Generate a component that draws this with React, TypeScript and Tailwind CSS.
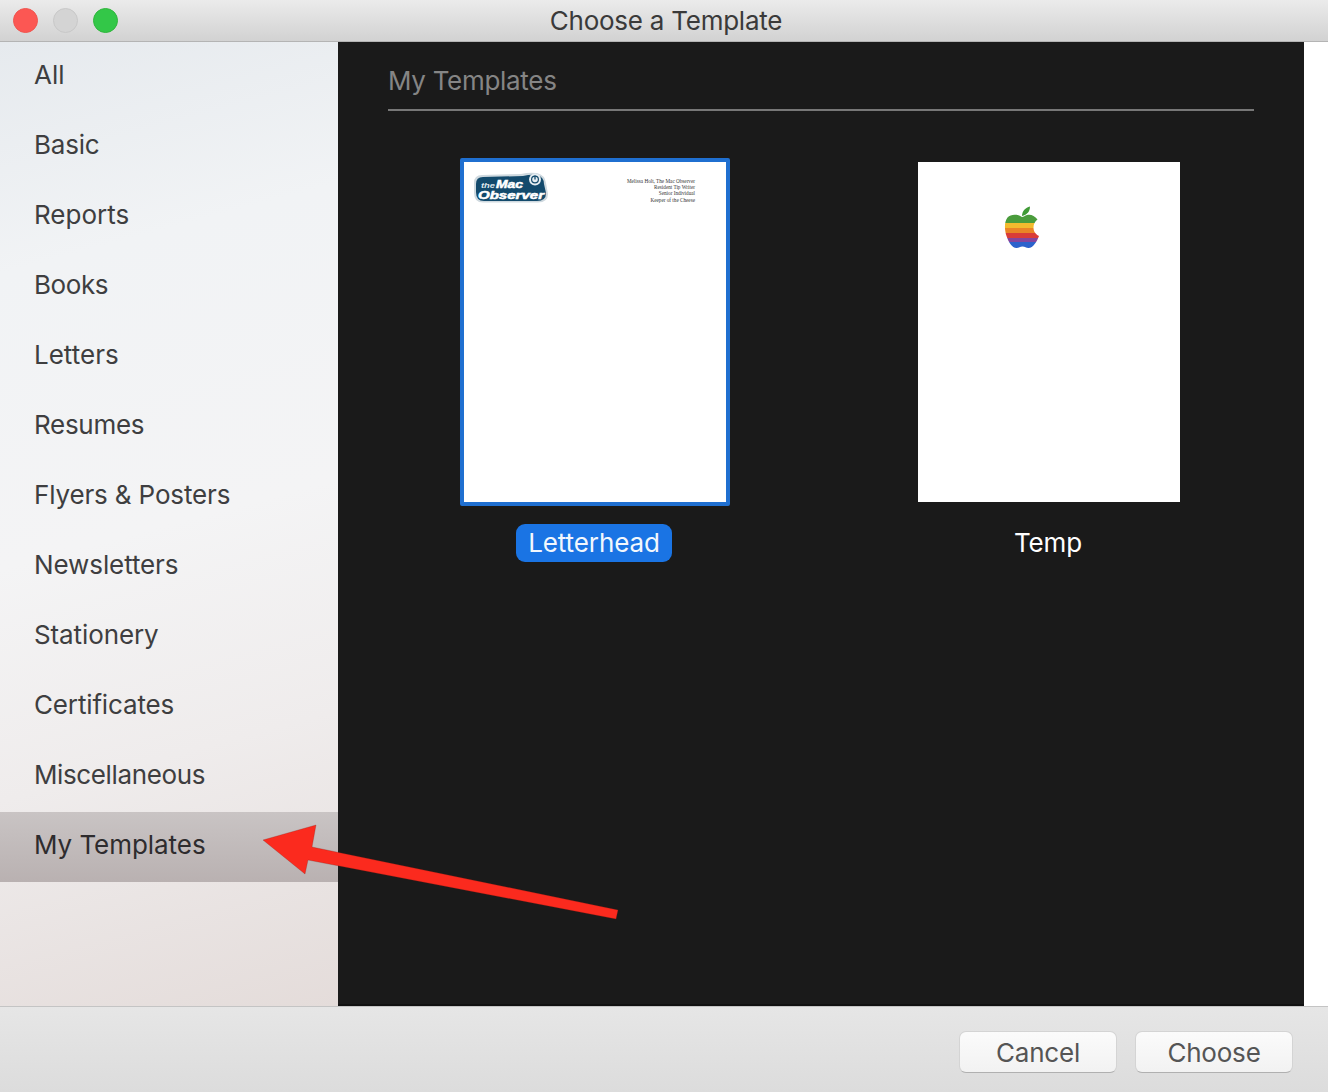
const categories = [
  { label: "All", tracking: "tracking-[0px]" },
  { label: "Basic", tracking: "tracking-[-0.2px]" },
  { label: "Reports", tracking: "tracking-[0px]" },
  { label: "Books", tracking: "tracking-[-0.4px]" },
  { label: "Letters", tracking: "tracking-[0px]" },
  { label: "Resumes", tracking: "tracking-[-0.3px]" },
  { label: "Flyers & Posters", tracking: "tracking-[-0.15px]" },
  { label: "Newsletters", tracking: "tracking-[-0.1px]" },
  { label: "Stationery", tracking: "tracking-[-0.1px]" },
  { label: "Certificates", tracking: "tracking-[-0.15px]" },
  { label: "Miscellaneous", tracking: "tracking-[-0.38px]" },
];

function MacLogo() {
  return (
    <svg width="76" height="32" viewBox="0 0 76 32" className="block">
      <path d="M9 4 L48 3 Q56 1 64 2 Q72 4 73 12 L75 23 Q75 31.5 65 31.5 L10 31.5 Q1 31.5 1 22 L1 12 Q1 4 9 4 Z" fill="#cfd9df" />
      <path d="M10 6 L50 5 Q58 3 64 4 Q71 6 71 13 L73 22 Q73 30 64 30 L11 30 Q3 30 3 21 L3 13 Q3 6 10 6 Z" fill="#134a6c" />
      <circle cx="62" cy="8.5" r="6" fill="#e6edf1" />
      <circle cx="62" cy="8.5" r="3.4" fill="none" stroke="#134a6c" strokeWidth="1.2" />
      <path d="M62 4.5 V8.5" stroke="#134a6c" strokeWidth="1.3" />
      <text x="8" y="16.5" fontFamily="'Liberation Sans', sans-serif" fontWeight="700" fontStyle="italic" fontSize="8" textLength="14" lengthAdjust="spacingAndGlyphs" fill="#dfe7ec">the</text>
      <text x="23" y="16.5" fontFamily="'Liberation Sans', sans-serif" fontWeight="700" fontStyle="italic" fontSize="11" textLength="27" lengthAdjust="spacingAndGlyphs" stroke="#ffffff" strokeWidth="0.5" fill="#ffffff">Mac</text>
      <text x="5" y="27.5" fontFamily="'Liberation Sans', sans-serif" fontWeight="700" fontStyle="italic" fontSize="11" textLength="66" lengthAdjust="spacingAndGlyphs" stroke="#ffffff" strokeWidth="0.5" fill="#ffffff">Observer</text>
    </svg>
  );
}

function AppleLogo() {
  return (
    <svg width="36" height="42" viewBox="0 0 36 42" className="block">
      <defs>
        <clipPath id="apple-body">
          <path d="M18 11 C14 8 7 7.5 3.5 11.5 C0 16 0.5 24 2.5 30 C4.5 36 8 42 12.5 42 C15 42 16 40.5 18.5 40.5 C21 40.5 22 42 24.5 42 C29 42 33 35.5 35 30 C31 28 29.5 25 29.5 21.5 C29.5 18 31 15.5 33.5 13.5 C30.5 9 26 8 23 9 C21 9.7 19.5 11 18 11 Z" />
        </clipPath>
      </defs>
      <path d="M18 10 C18 5 21.5 1.5 26 0.5 C26 5.5 23 9 18 10 Z" fill="#3f9a35" />
      <g clipPath="url(#apple-body)">
        <rect x="0" y="6" width="36" height="11" fill="#4a9c3c" />
        <rect x="0" y="17" width="36" height="5" fill="#f2bb2e" />
        <rect x="0" y="22" width="36" height="5" fill="#ea8526" />
        <rect x="0" y="27" width="36" height="5" fill="#da3c38" />
        <rect x="0" y="32" width="36" height="4" fill="#84459e" />
        <rect x="0" y="36" width="36" height="6" fill="#2c62cc" />
      </g>
    </svg>
  );
}

export default function App() {
  return (
    <div className="relative flex h-[1092px] w-[1328px] flex-col overflow-hidden bg-white font-['Inter','Liberation_Sans',sans-serif]">
      <header className="relative flex h-[42px] shrink-0 items-center justify-center border-b border-[#b4b4b4] bg-gradient-to-b from-[#ebebeb] to-[#d2d2d2] pl-[4px]">
        <div className="absolute left-[13px] top-[8px] flex gap-[15px]">
          <span className="h-[25px] w-[25px] rounded-full border border-[#f0554f] bg-[#fc5753]" />
          <span className="h-[25px] w-[25px] rounded-full border border-[#c8c8c8] bg-[#d4d4d4]" />
          <span className="h-[25px] w-[25px] rounded-full border border-[#2fb63c] bg-[#33c748]" />
        </div>
        <h1 className="text-[26px] leading-none tracking-[-0.25px] text-[#3a3a3a]">Choose a Template</h1>
      </header>

      <div className="flex min-h-0 flex-1">
        <nav className="w-[338px] shrink-0 bg-[linear-gradient(165deg,#e6eaee_0%,#f1f3f5_22%,#f4f4f5_50%,#efecec_72%,#e4dcda_100%)]">
          {categories.map((c) => (
            <div key={c.label} className={`flex h-[70px] items-center pb-[4px] pl-[34px] text-[26px] leading-none text-[#3e3e40] ${c.tracking}`}>{c.label}</div>
          ))}
          <div className="flex h-[70px] items-center bg-gradient-to-b from-[#c9c4c4] to-[#b9b1b1] pb-[4px] pl-[34px] text-[26px] leading-none tracking-[-0.05px] text-[#2e2c2e]">My Templates</div>
        </nav>

        <main className="flex w-[966px] shrink-0 flex-col border-b-2 border-b-[#111] bg-[#1a1a1a]">
          <div className="mx-[50px] flex h-[69px] shrink-0 items-center border-b-2 border-[#777] pt-[11px] text-[26px] leading-none tracking-[-0.3px] text-[#858585]">My Templates</div>
          <div className="grid grid-cols-[454px_454px] justify-center pl-[2px]">
            <div className="flex flex-col items-center pt-[47px]">
              <div className="h-[348px] w-[270px] rounded-[2px] border-4 border-[#1f6fd0] bg-white pl-[9px] pr-[31px] pt-[9px]">
                <div className="flex items-start justify-between">
                  <MacLogo />
                  <div className="pt-[7px] text-right font-['Liberation_Serif',serif] text-[5.2px] leading-[6.2px] text-[#333]">
                    <p>Melissa Holt, The Mac Observer</p>
                    <p>Resident Tip Writer</p>
                    <p>Senior Individual</p>
                    <p>Keeper of the Cheese</p>
                  </div>
                </div>
              </div>
              <div className="mr-[2px] mt-[18px] flex h-[38px] w-[156px] items-center justify-center rounded-[9px] bg-[#1a74e4] text-[26px] leading-none tracking-[-0.1px] text-[#f2f7fd]">Letterhead</div>
            </div>
            <div className="flex flex-col items-center pt-[51px]">
              <div className="h-[340px] w-[262px] bg-white pl-[86px] pt-[44px]">
                <AppleLogo />
              </div>
              <div className="mr-[2px] mt-[22px] flex h-[38px] items-center justify-center text-[26px] leading-none tracking-[-0.1px] text-white">Temp</div>
            </div>
          </div>
        </main>
        <div className="flex-1 bg-white" />
      </div>

      <footer className="flex h-[86px] shrink-0 items-start justify-end gap-[18px] border-t border-[#c4c4c4] bg-gradient-to-b from-[#e6e6e6] to-[#dcdcdc] pr-[35px] pt-[24px]">
        <button className="h-[42px] w-[158px] rounded-[7px] border border-[#d4d4d4] border-b-[#b0b0b0] bg-gradient-to-b from-[#fbfbfb] to-[#f2f2f2] pt-[2px] text-[26px] leading-none tracking-[-0.2px] text-[#555]">Cancel</button>
        <button className="h-[42px] w-[158px] rounded-[7px] border border-[#d4d4d4] border-b-[#b0b0b0] bg-gradient-to-b from-[#fbfbfb] to-[#f2f2f2] pt-[2px] text-[26px] leading-none tracking-[-0.2px] text-[#555]">Choose</button>
      </footer>

      <svg className="pointer-events-none absolute left-[255px] top-[815px]" width="375" height="115" viewBox="255 815 375 115">
        <polygon points="263,840 316,825 312,847 618,910 616,919 308,860 305,874" fill="#fb2a1e" stroke="#7a1a14" strokeOpacity="0.25" strokeWidth="1" />
      </svg>
    </div>
  );
}
